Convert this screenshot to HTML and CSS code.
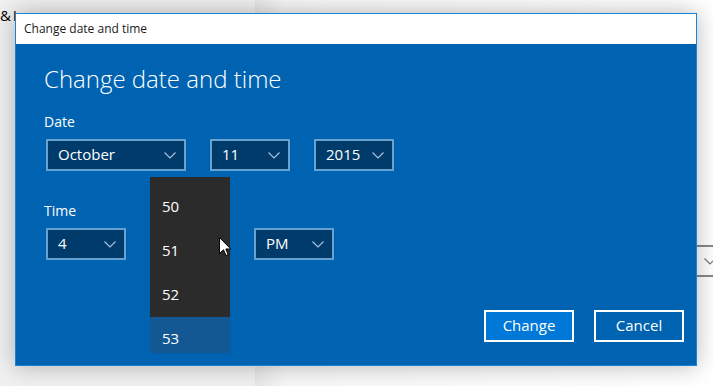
FILE: index.html
```html
<!DOCTYPE html>
<html>
<head>
    <title>Change date and time</title>
    <link rel="stylesheet" href="styles.css">
</head>
<body>
    <div class="desk">
        <div class="side">
            <span class="side-text">&amp; I</span>
        </div>
        <div class="main">
            <div class="back-select">
                <svg class="chev" width="12" height="7" viewBox="0 0 12 7"><polyline points="0.5,0.5 6,6 11.5,0.5" fill="none" stroke="#777" stroke-width="1.2"/></svg>
            </div>
        </div>
    </div>

    <div class="dialog">
        <div class="titlebar">Change date and time</div>
        <div class="content">
            <h1>Change date and time</h1>

            <div class="label">Date</div>
            <div class="row">
                <div class="select wide">
                    <span>October</span>
                    <svg class="chev" width="12" height="7" viewBox="0 0 12 7"><polyline points="0.5,0.5 6,6 11.5,0.5" fill="none" stroke="#a9c6e2" stroke-width="1.1"/></svg>
                </div>
                <div class="select">
                    <span>11</span>
                    <svg class="chev" width="12" height="7" viewBox="0 0 12 7"><polyline points="0.5,0.5 6,6 11.5,0.5" fill="none" stroke="#a9c6e2" stroke-width="1.1"/></svg>
                </div>
                <div class="select">
                    <span>2015</span>
                    <svg class="chev" width="12" height="7" viewBox="0 0 12 7"><polyline points="0.5,0.5 6,6 11.5,0.5" fill="none" stroke="#a9c6e2" stroke-width="1.1"/></svg>
                </div>
            </div>

            <div class="label time">Time</div>
            <div class="row">
                <div class="select">
                    <span>4</span>
                    <svg class="chev" width="12" height="7" viewBox="0 0 12 7"><polyline points="0.5,0.5 6,6 11.5,0.5" fill="none" stroke="#a9c6e2" stroke-width="1.1"/></svg>
                </div>
                <div class="select"></div>
                <div class="select">
                    <span>PM</span>
                    <svg class="chev" width="12" height="7" viewBox="0 0 12 7"><polyline points="0.5,0.5 6,6 11.5,0.5" fill="none" stroke="#a9c6e2" stroke-width="1.1"/></svg>
                </div>
            </div>

            <div class="buttons">
                <button class="btn primary">Change</button>
                <button class="btn">Cancel</button>
            </div>
        </div>

        <div class="picker">
            <div class="picker-list">
                <div class="item">50</div>
                <div class="item">51</div>
                <div class="item">52</div>
                <div class="item selected">53</div>
            </div>
        </div>
    </div>

    <svg class="cursor" width="13" height="20" viewBox="0 0 13 20">
        <path d="M0.5 0.5 L0.5 16.5 L4.5 12.8 L7 18.5 L9.2 17.5 L6.8 12 L11.8 12 Z" fill="#fff" stroke="#000" stroke-width="1" stroke-linejoin="miter"/>
    </svg>
</body>
</html>
```

FILE: styles.css
```css
* {
    box-sizing: border-box;
    margin: 0px;
}

body {
    width: 713px;
    height: 386px;
    overflow: hidden;
    font-family: "Open Sans", "Noto Sans", sans-serif;
    background: #ffffff;
}

.desk {
    display: flex;
    height: 386px;
}

.side {
    width: 255px;
    background: #f0f0f0;
    padding-top: 5px;
}

.side-text {
    display: block;
    font-size: 15px;
    line-height: 20px;
    word-spacing: -2px;
    color: #000;
}

.main {
    flex: 1;
    display: flex;
    justify-content: flex-end;
    padding-top: 245px;
    background: linear-gradient(to right, #e6e6e6, #f7f7f7 30px, #fff);
}

.back-select {
    width: 60px;
    height: 32px;
    margin-right: -13px;
    border-top: 2px solid #888;
    border-bottom: 2px solid #888;
    display: flex;
    align-items: center;
    justify-content: flex-end;
    padding-right: 10px;
}

.dialog {
    position: absolute;
    left: 15px;
    top: 13px;
    width: 682px;
    height: 353px;
    border: 1px solid #1883d7;
    background: #0063b1;
    box-shadow: 0 0 22px rgba(0, 0, 0, 0.28);
    display: flex;
    flex-direction: column;
}

.titlebar {
    height: 30px;
    background: #fff;
    color: #1b1b1b;
    font-size: 12px;
    line-height: 30px;
    padding-left: 8px;
}

.content {
    flex: 1;
    padding: 19px 12px 0 28px;
    color: #fff;
    display: flex;
    flex-direction: column;
}

h1 {
    font-size: 24px;
    font-weight: 300;
    line-height: 32px;
}

.label {
    font-size: 14px;
    line-height: 20px;
    margin-top: 17px;
    margin-bottom: 7px;
}

.label.time {
    margin-top: 30px;
}

.row {
    display: flex;
    gap: 24px;
    margin-left: 2px;
}

.select {
    width: 80px;
    height: 32px;
    border: 2px solid #66a1d0;
    background: #003b6b;
    display: flex;
    align-items: center;
    justify-content: space-between;
    padding: 0 8px 2px 10px;
    font-size: 15px;
    line-height: 26px;
}

.select .chev {
    margin-top: 2px;
}

.select.wide {
    width: 140px;
}

.buttons {
    display: flex;
    justify-content: flex-end;
    gap: 20px;
    margin-top: 50px;
}

.btn {
    width: 90px;
    height: 32px;
    border: 2px solid #fff;
    background: #0063b1;
    color: #fff;
    font-family: "Open Sans", "Noto Sans", sans-serif;
    font-size: 15px;
    padding: 0 0 2px 0;
}

.btn.primary {
    background: #0078d7;
}

.picker {
    position: absolute;
    left: 134px;
    top: 163px;
    width: 80px;
    height: 176px;
    background: #2b2b2b;
    overflow: hidden;
}

.picker-list {
    padding-top: 8px;
}

.item {
    height: 44px;
    line-height: 42px;
    padding-left: 12px;
    font-size: 15px;
    color: #fff;
}

.item.selected {
    background: #145893;
}

.cursor {
    position: absolute;
    left: 219px;
    top: 237px;
}
```
